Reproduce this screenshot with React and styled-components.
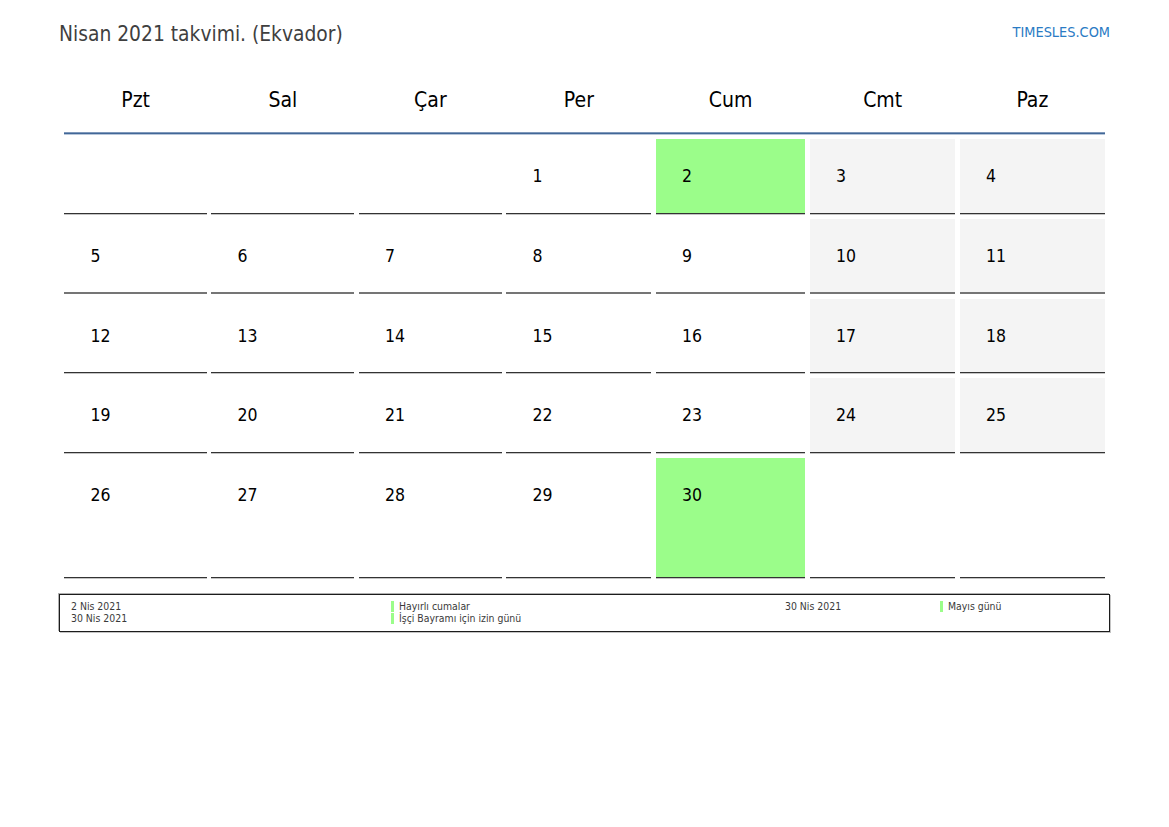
import React from "react";
import styled, { createGlobalStyle } from "styled-components";

const Global = createGlobalStyle`
  html, body { margin: 0; padding: 0; background: #fff; }
  body { font-family: "DejaVu Sans Condensed", "DejaVu Sans", sans-serif; font-stretch: condensed; }
`;

const Page = styled.div`
  width: 1169px;
  height: 827px;
  box-sizing: border-box;
  padding: 20px 59px 0 59px;
  overflow: hidden;
`;

const TopBar = styled.header`
  display: flex;
  justify-content: space-between;
  align-items: center;
  height: 26px;
`;

const Title = styled.h1`
  margin: 1px 0 0;
  font-size: 20.8px;
  font-weight: 400;
  color: #3f3f3f;
`;

const Brand = styled.div`
  font-size: 14.4px;
  color: #2a7bc4;
  margin-top: -2px;
`;

const Calendar = styled.div`
  margin: 0 5px 0 5.4px;
  padding-top: 26px;
  display: grid;
  grid-template-columns: 142.5px 143px 143px 145px 149.5px 145.5px 145px;
  column-gap: 4.5px;
  width: 1041px;
`;

const Head = styled.div`
  height: 60px;
  display: flex;
  align-items: center;
  justify-content: center;
  font-size: 21px;
  color: #000;
  padding-bottom: 4px;
  box-sizing: border-box;
`;

const HeadRule = styled.div`
  grid-column: 1 / -1;
  box-sizing: border-box;
  height: 3px;
  background: #416797;
  border-top: 1px solid #7f98ba;
  border-bottom: 1px solid #b7c6da;
  margin-bottom: 4px;
`;

const Cell = styled.div`
  box-sizing: border-box;
  height: ${(p) => p.$h}px;
  margin-bottom: 5px;
  padding: 27px 0 0 26px;
  font-size: 17.5px;
  line-height: 20px;
  color: #000;
  background: ${(p) => (p.$tone === "holiday" ? "#9bfd8a" : p.$tone === "weekend" ? "#f4f4f4" : "transparent")};
  border-bottom: ${(p) => (p.$soft ? "2px solid #757575" : "1px solid #333")};
  box-shadow: ${(p) => (p.$soft ? "none" : "0 1px 0 #c4c4c4")};
`;

const Legend = styled.div`
  box-sizing: border-box;
  width: 1051px;
  height: 38px;
  margin-top: 11px;
  border: 1px solid #1c1c1c;
  box-shadow: -1px -1px 0 #b0b0b0, 1px 1px 0 #c4c4c4;
  padding: 5px 11px;
  display: grid;
  grid-template-columns: 320px 394px 155px 1fr;
  font-size: 10.4px;
  line-height: 12px;
  color: #3a3a3a;
`;

const LegendCol = styled.div`
  display: flex;
  flex-direction: column;
`;

const Mark = styled.div`
  display: flex;
  align-items: center;
  gap: 5px;
  &::before {
    content: "";
    width: 3px;
    height: 11px;
    background: #9bfd8a;
  }
`;

const days = ["Pzt", "Sal", "Çar", "Per", "Cum", "Cmt", "Paz"];
const heights = [75, 74.7, 74.7, 74.7, 120];
const cells = [
  ["", "", "", "1", "2", "3", "4"],
  ["5", "6", "7", "8", "9", "10", "11"],
  ["12", "13", "14", "15", "16", "17", "18"],
  ["19", "20", "21", "22", "23", "24", "25"],
  ["26", "27", "28", "29", "30", "", ""],
];

const tone = (v, i) => {
  if (v === "2" || v === "30") return "holiday";
  if (i >= 5 && v) return "weekend";
  return undefined;
};

export default function App() {
  return (
    <Page>
      <Global />
      <TopBar>
        <Title>Nisan 2021 takvimi. (Ekvador)</Title>
        <Brand>TIMESLES.COM</Brand>
      </TopBar>
      <Calendar>
        {days.map((d) => (
          <Head key={d}>{d}</Head>
        ))}
        <HeadRule />
        {cells.map((row, r) =>
          row.map((v, i) => (
            <Cell key={`${r}-${i}`} $h={heights[r]} $tone={tone(v, i)} $soft={r === 1}>
              {v}
            </Cell>
          ))
        )}
      </Calendar>
      <Legend>
        <LegendCol>
          <div>2 Nis 2021</div>
          <div>30 Nis 2021</div>
        </LegendCol>
        <LegendCol>
          <Mark>Hayırlı cumalar</Mark>
          <Mark>İşçi Bayramı için izin günü</Mark>
        </LegendCol>
        <LegendCol>
          <div>30 Nis 2021</div>
        </LegendCol>
        <LegendCol>
          <Mark>Mayıs günü</Mark>
        </LegendCol>
      </Legend>
    </Page>
  );
}
